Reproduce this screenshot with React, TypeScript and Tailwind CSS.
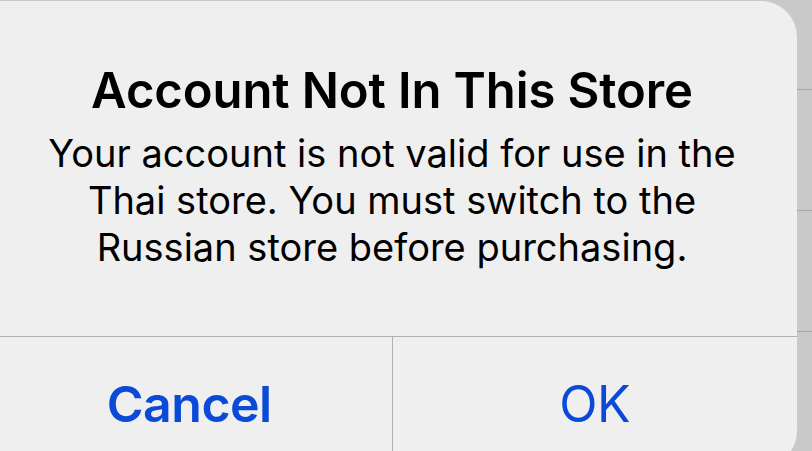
export default function App() {
  return (
    <div
      className="flex h-[451px] w-[812px] overflow-hidden bg-[#c9c9ca]"
      style={{ fontFamily: "Inter, 'Noto Sans', sans-serif" }}
    >
      <div className="ml-[-13px] mt-[1px] flex h-[466px] w-[810px] shrink-0 flex-col rounded-tr-[36px] rounded-br-[36px] bg-[#efeff0]">
        <div className="flex h-[335px] flex-col items-center pt-[62px] text-black">
          <h1 className="text-[49px] font-semibold leading-[56px] tracking-[-0.1px]">
            Account Not In This Store
          </h1>
          <p className="mt-[11px] text-center text-[38px] leading-[47px]">
            Your account is not valid for use in the
            <br />
            Thai store. You must switch to the
            <br />
            Russian store before purchasing.
          </p>
        </div>
        <div className="flex flex-1 border-t border-[#b1b1b3] text-[#0b49d7]">
          <button className="flex-1 self-start pt-[37px] text-[50px] font-semibold leading-[60px] tracking-[-0.5px]">
            Cancel
          </button>
          <div className="w-px bg-[#b1b1b3]" />
          <button className="flex-1 self-start pt-[37px] text-[50px] leading-[60px] tracking-[-0.5px]">
            OK
          </button>
        </div>
      </div>
      <div className="flex flex-1 flex-col">
        <div className="h-[90px] border-b border-[#a6a6a8]" />
        <div className="h-[121px] border-b border-[#a6a6a8]" />
        <div className="h-[121px] border-b border-[#a6a6a8]" />
      </div>
    </div>
  );
}
